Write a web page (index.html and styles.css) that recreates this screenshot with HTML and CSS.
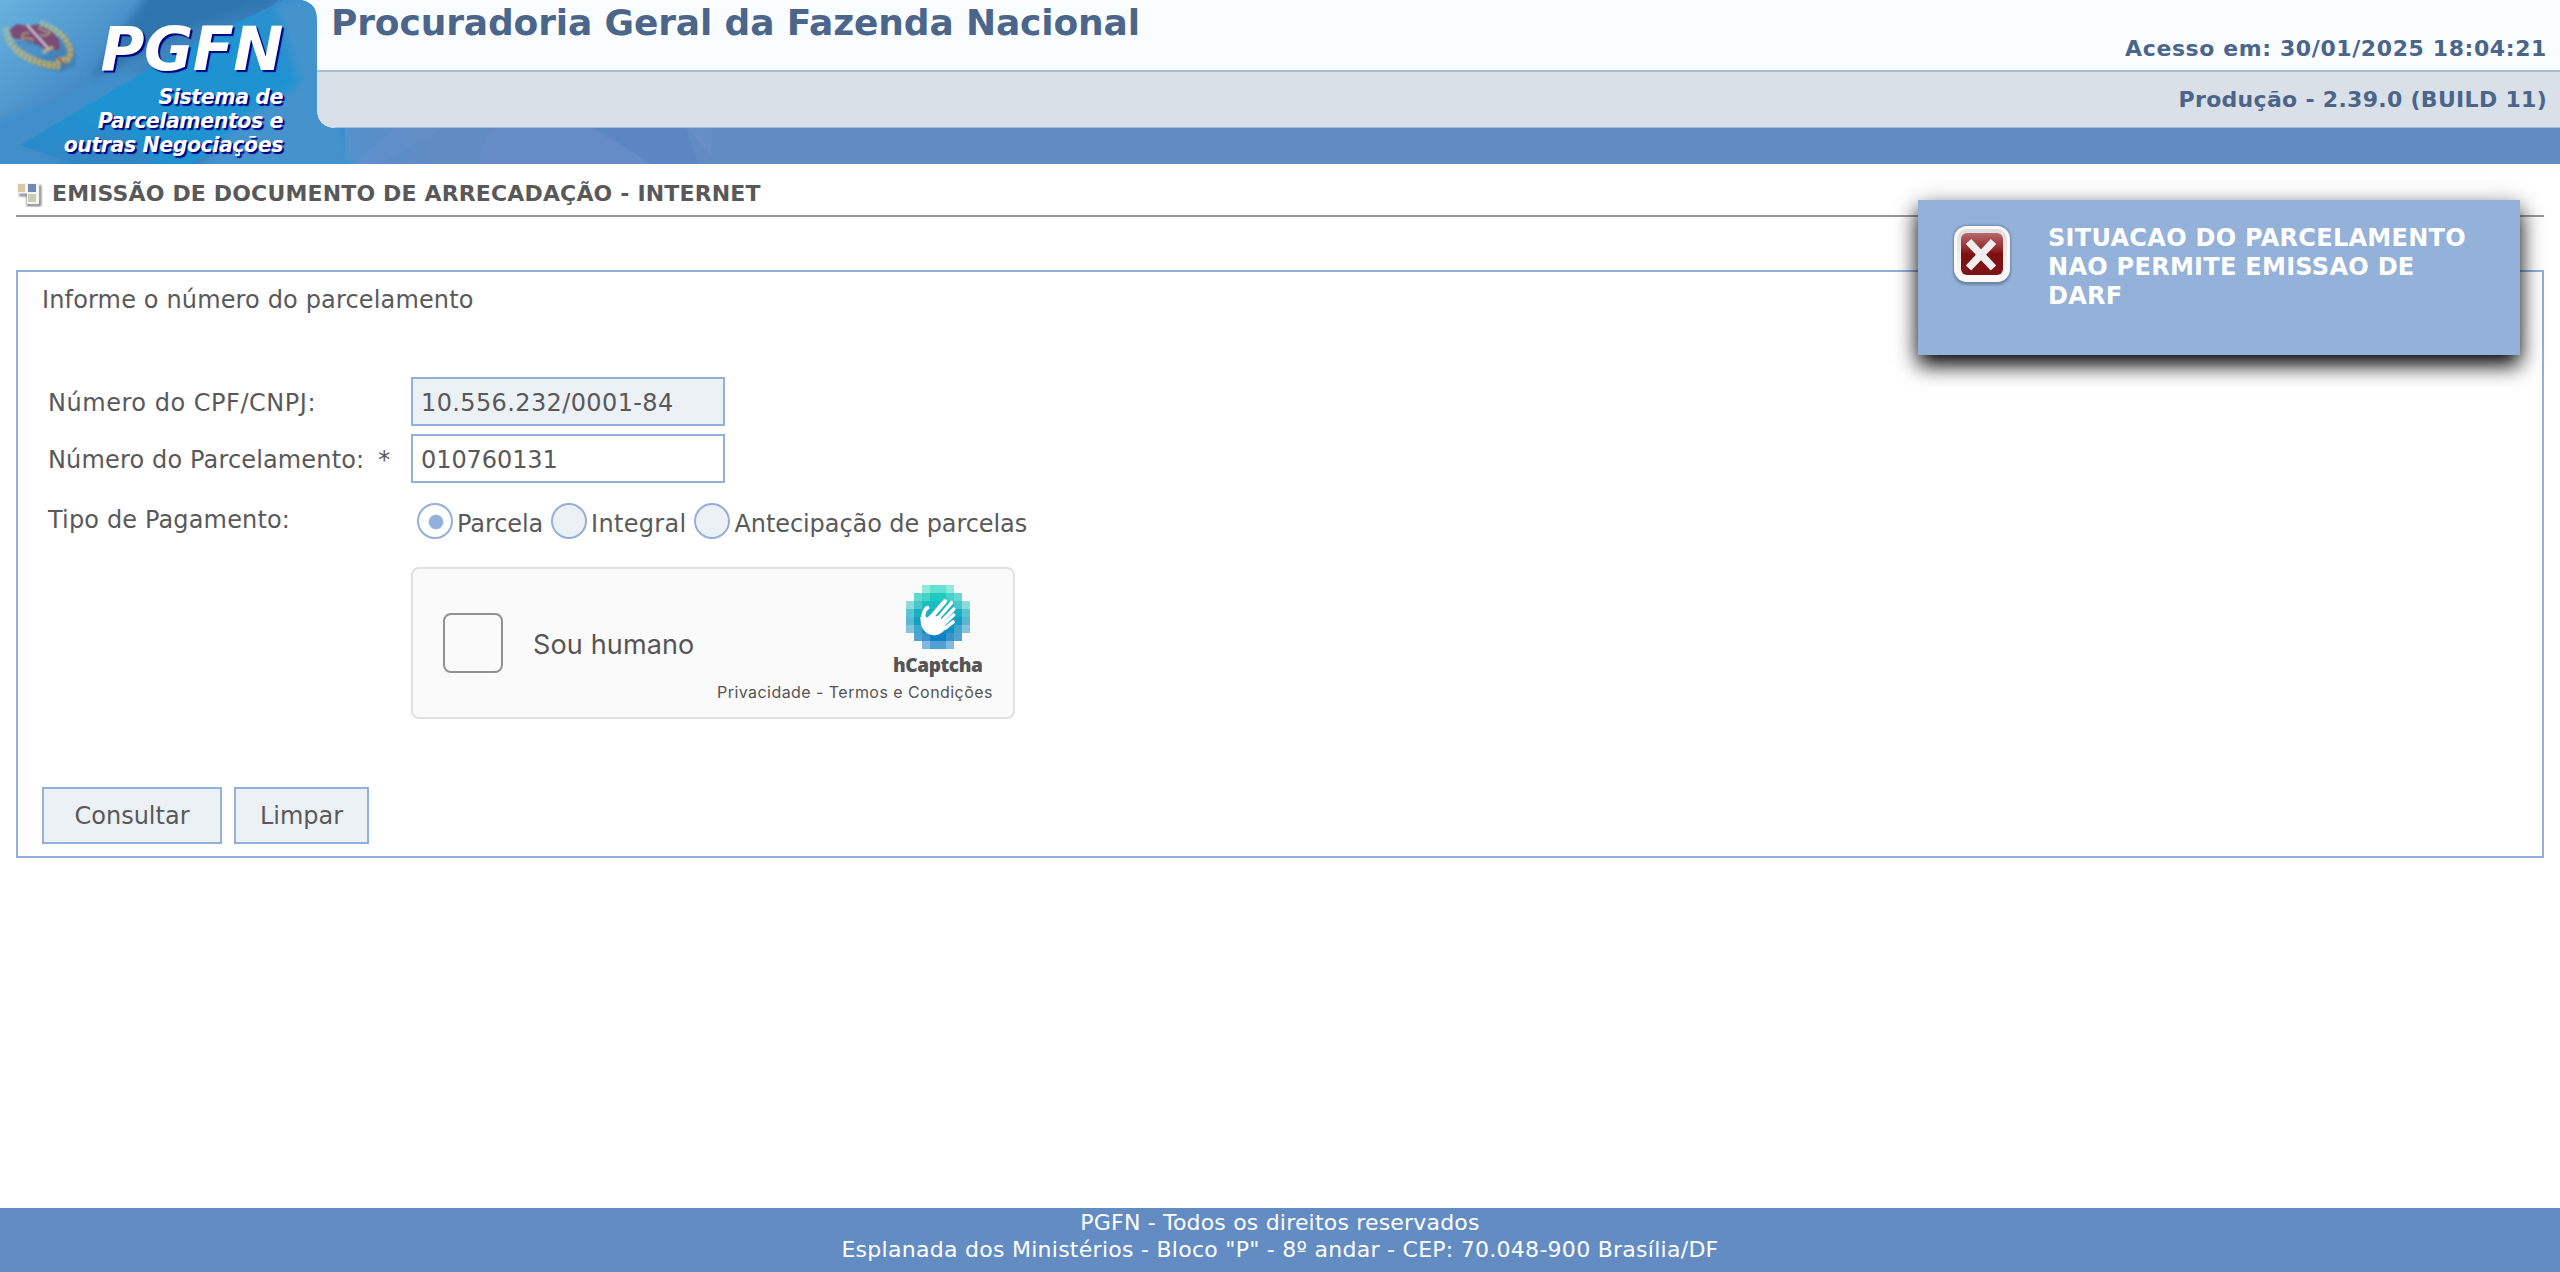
FILE: index.html
```html
<!DOCTYPE html>
<html lang="pt-BR">
<head>
<meta charset="utf-8">
<title>PGFN - Emissão de Documento de Arrecadação</title>
<link rel="stylesheet" href="styles.css">
</head>
<body>
<header class="header">
  <svg class="header-art" viewBox="0 0 2560 164" width="2560" height="164" aria-hidden="true">
    <defs>
      <linearGradient id="sky" x1="0" y1="0" x2="1" y2="0.5">
        <stop offset="0" stop-color="#69b2de"/><stop offset=".35" stop-color="#4a90c9"/><stop offset=".7" stop-color="#3276b0"/><stop offset="1" stop-color="#3a8ccb"/>
      </linearGradient>
      <linearGradient id="bar" x1="317" y1="0" x2="700" y2="0" gradientUnits="userSpaceOnUse">
        <stop offset="0" stop-color="#4793cf"/><stop offset=".1" stop-color="#5690cb"/><stop offset=".3" stop-color="#618bc3"/><stop offset="1" stop-color="#618bc3"/>
      </linearGradient>
      <linearGradient id="gold" x1="0" y1="0" x2="1" y2="1">
        <stop offset="0" stop-color="#8fb9b8"/><stop offset=".5" stop-color="#b3b384"/><stop offset="1" stop-color="#b9a25c"/>
      </linearGradient>
      <linearGradient id="beam" x1="0" y1="1" x2="1" y2="0">
        <stop offset="0" stop-color="#2f88c6"/><stop offset=".3" stop-color="#1f93d1"/><stop offset=".7" stop-color="#1f93d1"/><stop offset="1" stop-color="#338fcd"/>
      </linearGradient>
      <filter id="soft" x="-20%" y="-20%" width="140%" height="140%"><feGaussianBlur stdDeviation="5"/></filter>
      <filter id="fine"><feGaussianBlur stdDeviation="0.8"/></filter>
    </defs>
    <rect width="2560" height="164" fill="url(#bar)"/>
    <rect width="345" height="164" fill="url(#sky)"/>
    <g filter="url(#soft)">
      <path d="M-10 124 L120 70 L180 90 L20 144 L110 174 L-10 174Z" fill="#3f8fca"/>
      <path d="M150 -10 L300 -10 L200 26 L90 80 L120 34Z" fill="#2f74af"/>
    </g>
    <path d="M20 145 L110 92 L200 40 L284 0 L317 0 L317 90 L250 130 L190 164 L75 164Z" fill="url(#beam)"/>
    <g filter="url(#soft)">
      <path d="M275 0 L317 0 L350 180 L190 180 L240 120 L300 84Z" fill="#4593cd"/>
      <path d="M50 146 L120 130 L160 170 L70 170Z" fill="#3186c4"/>
    </g>
    <path d="M355 164 L394 128 L443 128 L380 164Z" fill="#6b92cb" opacity=".35"/>
    <path d="M478 164 Q482 140 494 128 L590 128 L652 164Z" fill="#6a8fc9" opacity=".45"/>
    <path d="M594 128 L652 164 L698 164 L686 128Z" fill="#5984bf" opacity=".6"/>
    <path d="M688 128 L711 128 L711 156Z" fill="#6c91ca" opacity=".6"/>
    <g filter="url(#fine)">
      <path d="M10 42 Q30 70 62 72 L74 66 Q80 50 66 36Z" fill="#2f72a4" opacity=".5"/>
      <path d="M20 42 Q36 46 50 54 L34 58 Q24 54 18 46Z" fill="#4c93c6"/>
      <path d="M9 30 L17 24 L28 26 L40 24 L52 31 L59 40 L60 50 L48 50 L32 42 L12 38Z" fill="#7c4c76"/>
      <path d="M6 27 Q7 42 19 52 Q36 65 60 66" fill="none" stroke="url(#gold)" stroke-width="7" stroke-dasharray="4 1"/>
      <path d="M40 23 Q58 28 67 42 Q74 53 67 60 L56 60" fill="none" stroke="url(#gold)" stroke-width="6" stroke-dasharray="4 1"/>
      <path d="M22 39 Q21 32 29 33 M34 40 Q24 36 22 40 M38 27 Q46 34 51 31 M40 35 Q48 37 50 32" fill="none" stroke="#a4917a" stroke-width="2"/>
      <path d="M27 25 L48 48" stroke="#cdbfd6" stroke-width="2.2"/>
      <path d="M43 52 L53 47" stroke="#c1b27a" stroke-width="3"/>
      <path d="M56 56 L66 66" stroke="#8c5a6a" stroke-width="2"/>
    </g>
    <path d="M302 0 Q317 3 317 20 V108 Q317 128 337 128 H2560 V0Z" fill="#f9fdff"/>
    <path d="M317 70 H2560 V128 H337 Q317 128 317 108Z" fill="#d9e0e8"/>
    <path d="M317 71 H2560" stroke="#abbdd2" stroke-width="2"/>
    <path d="M335 127.5 H2560" stroke="#a7bdd8"/>
  </svg>
  <div class="brand">
    <div class="brand-name"><span>PGFN</span></div>
    <div class="brand-sub"><span>Sistema de</span><span>Parcelamentos e</span><span>outras Negociações</span></div>
  </div>
  <h1 class="org"><span>Procuradoria Geral da Fazenda Nacional</span></h1>
  <div class="meta"><span class="access">Acesso em: 30/01/2025 18:04:21</span><span class="build">Produção - 2.39.0 (BUILD 11)</span></div>
</header>

<main class="main">
  <h2 class="page-title">
    <svg class="title-icon" width="28" height="28" viewBox="0 0 28 28" aria-hidden="true">
      <defs><filter id="blur1"><feGaussianBlur stdDeviation="1"/></filter></defs>
      <path d="M3 14h9v10h12V4" fill="none" stroke="#777" stroke-width="2.5" filter="url(#blur1)"/>
      <rect x="1" y="2" width="22" height="10" fill="#f4f4f4"/><rect x="11" y="12" width="12" height="11" fill="#f4f4f4"/>
      <rect x="2" y="3" width="7" height="8" fill="#d6cba2"/><rect x="12" y="3" width="8" height="8" fill="#6f88b7"/><rect x="12" y="13" width="8" height="8" fill="#c6d0b2"/>
    </svg>
    <span>EMISSÃO DE DOCUMENTO DE ARRECADAÇÃO - INTERNET</span>
  </h2>
  <form class="panel">
    <p class="intro"><span>Informe o número do parcelamento</span></p>
    <div class="row"><label class="label-cpf"><span>Número do CPF/CNPJ:</span></label><div class="field field-off"><span>10.556.232/0001-84</span></div></div>
    <div class="row"><label class="label-num"><span>Número do Parcelamento:</span><span>*</span></label><div class="field field-num"><span>010760131</span></div></div>
    <div class="row row-tipo"><label><span>Tipo de Pagamento:</span></label>
      <div class="radios">
        <i class="radio radio-on"></i><span class="opt-parcela">Parcela</span>
        <i class="radio"></i><span class="opt-integral">Integral</span>
        <i class="radio"></i><span class="opt-antecipa">Antecipação de parcelas</span>
      </div>
    </div>
    <div class="captcha">
      <i class="checkbox"></i>
      <div class="human"><span>Sou humano</span></div>
      <div class="captcha-side">
        <svg class="hlogo" width="64" height="64" viewBox="0 0 8 8" shape-rendering="crispEdges" aria-hidden="true">
          <path d="M2 0h1v1H2zM5 0h1v1H5z" fill="#8fe9dc"/><path d="M3 0h2v1H3z" fill="#63e1cf"/>
          <path d="M1 1h1v1H1zM6 1h1v1H6z" fill="#62dacd"/><path d="M2 1h1v1H2zM5 1h1v1H5z" fill="#49d2c9"/><path d="M3 1h2v1H3z" fill="#1fcbc0"/>
          <path d="M0 2h1v1H0zM7 2h1v1H7z" fill="#8ddcdb"/><path d="M1 2h1v1H1zM6 2h1v1H6z" fill="#49c7ca"/><path d="M2 2h4v1H2z" fill="#1cbcc2"/>
          <path d="M0 3h1v1H0zM7 3h1v1H7z" fill="#5bc3cf"/><path d="M1 3h6v1H1z" fill="#1aafc2"/>
          <path d="M0 4h1v1H0zM7 4h1v1H7z" fill="#59b7d0"/><path d="M1 4h6v1H1z" fill="#159fc0"/>
          <path d="M0 5h1v1H0zM7 5h1v1H7z" fill="#85c3dc"/><path d="M1 5h1v1H1zM6 5h1v1H6z" fill="#3fa5ca"/><path d="M2 5h4v1H2z" fill="#1391c0"/>
          <path d="M1 6h1v1H1zM6 6h1v1H6z" fill="#51a2d1"/><path d="M2 6h1v1H2zM5 6h1v1H5z" fill="#3994cc"/><path d="M3 6h2v1H3z" fill="#0b83c2"/>
          <path d="M2 7h1v1H2zM5 7h1v1H5z" fill="#82b7df"/><path d="M3 7h2v1H3z" fill="#519fd3"/>
          <g shape-rendering="auto" fill="none" stroke="#fff" stroke-linecap="round" stroke-linejoin="round" stroke-width=".44">
            <path d="M2.68 2.85Q2.2 3.1 2.15 4.1" stroke-width=".5"/>
            <path d="M4.85 2.05L3.1 4.1" stroke-width=".55"/>
            <path d="M5.7 2.2L3.9 4.3M5.98 3L4.3 4.7M5.95 3.75L4.6 5M5.9 4.62L4.9 5.4"/>
            <path d="M1.85 4.1Q2.3 3.6 2.6 4.15L3.1 3.8L4.2 4L4.7 4.8L5 5.4Q4.3 6.25 3.5 6.25Q1.8 6.1 1.85 4.1Z" fill="#fff" stroke-width=".1"/>
          </g>
        </svg>
        <div class="hname"><span>hCaptcha</span></div>
        <div class="hterms"><span>Privacidade - Termos e Condições</span></div>
      </div>
    </div>
    <div class="actions"><button type="button" class="btn-consultar"><span>Consultar</span></button><button type="button" class="btn-limpar"><span>Limpar</span></button></div>
  </form>
</main>

<footer class="footer"><span class="rights">PGFN - Todos os direitos reservados</span><span class="address">Esplanada dos Ministérios - Bloco "P" - 8º andar - CEP: 70.048-900 Brasília/DF</span></footer>

<aside class="toast">
  <svg width="64" height="66" viewBox="0 0 64 66" aria-hidden="true">
    <defs>
      <linearGradient id="frame" x1="0" y1="0" x2="0" y2="1"><stop offset="0" stop-color="#dedede"/><stop offset="1" stop-color="#fbfbfb"/></linearGradient>
      <linearGradient id="red" x1="0" y1="0" x2="0" y2="1"><stop offset="0" stop-color="#b8686c"/><stop offset=".35" stop-color="#962f33"/><stop offset=".5" stop-color="#7d0f12"/><stop offset="1" stop-color="#7f1417"/></linearGradient>
      <filter id="sh"><feGaussianBlur stdDeviation="1.2"/></filter>
    </defs>
    <rect x="3" y="3" width="58" height="60" rx="14" fill="#6d86a6" filter="url(#sh)"/>
    <rect x="4" y="4" width="56" height="56" rx="13" fill="#fafafa"/>
    <rect x="7" y="7" width="50" height="50" rx="10" fill="url(#frame)"/>
    <rect x="11" y="11" width="42" height="42" rx="6" fill="url(#red)"/>
    <path d="M18.500 19.500 L43.500 46 M43.500 19.500 L18.500 46" stroke="#eee" stroke-width="7.500"/>
  </svg>
  <div class="toast-text"><span>SITUACAO DO PARCELAMENTO</span><span>NAO PERMITE EMISSAO DE</span><span>DARF</span></div>
</aside>
</body>
</html>
```
FILE: styles.css
```css
* { box-sizing: border-box; }
body { margin: 0; min-height: 1272px; display: flex; flex-direction: column; background: #fff; color: #595959; font: 24px/30px "DejaVu Sans", Verdana, sans-serif; position: relative; overflow: hidden; }
h1, h2, p { margin: 0; font-weight: bold; }
span { white-space: nowrap; }
.header { position: relative; height: 164px; display: flex; color: #4c658a; font-weight: bold; }
.header-art { position: absolute; left: 0; top: 0; }
.brand, .org, .meta { position: relative; }
.brand { width: 331px; padding-right: 48px; text-align: right; color: #fff; font-style: italic; text-shadow: 2px 2px 1px #000080; }
.brand-name { font-size: 60px; line-height: 72px; letter-spacing: -.5px; padding-top: 13px; height: 85px; }
.brand-sub { font-size: 20.500px; letter-spacing: -.42px; line-height: 24px; display: flex; flex-direction: column; align-items: flex-end; }
.org { font-size: 36px; line-height: 44px; letter-spacing: -.14px; padding-top: 1px; flex: 1; }
.meta { font-size: 22px; display: flex; flex-direction: column; align-items: flex-end; padding: 34px 13px 0 0; gap: 21px; }
.access { letter-spacing: .6px; }
.build { letter-spacing: .3px; }
.main { flex: 1; padding: 0 16px; }
.page-title { display: flex; gap: 8px; align-items: center; height: 53px; padding-top: 9px; border-bottom: 2px solid #999; font-size: 22px; letter-spacing: .155px; }
.title-icon { margin-top: 2px; }
.panel { margin-top: 53px; height: 588px; border: 2px solid #92b0da; padding: 13px 24px 0; display: flex; flex-direction: column; letter-spacing: .15px; }
.intro { font-weight: normal; height: 92px; }
.row { display: flex; height: 57px; padding-left: 6px; }
.row label { width: 363px; padding-top: 11px; }
.label-cpf { letter-spacing: .53px; }
.label-num { display: flex; gap: 14px; }
.field { width: 314px; height: 49px; border: 2px solid #92b0da; padding: 9px 8px; letter-spacing: .38px; }
.field-num { letter-spacing: -.08px; }
.field-off { background: #ecf1f6; }
.row-tipo { height: 76px; }
.row .label-cpf, .row .label-num { padding-top: 11px; }
.row-tipo label { padding-top: 14px; }
.radios { display: flex; align-items: center; height: 36px; margin: 12px 0 0 6px; }
.radios span { padding: 5px 0 0 4px; margin-right: 8px; }
.opt-parcela { letter-spacing: -.1px; }
.opt-integral { letter-spacing: .3px; }
.opt-antecipa { letter-spacing: -.08px; }
.radio { width: 36px; height: 36px; border: 2px solid #92b0da; border-radius: 50%; background: #ecf1f6; flex: none; }
.radio-on { background: radial-gradient(circle at 17px 17px, #92b0da 6.5px, #fff 8px); }
.captcha { margin-left: 369px; width: 604px; height: 152px; border: 2px solid #e0e0e0; border-radius: 8px; background: #fafafa; display: flex; font-family: Inter, "Liberation Sans", sans-serif; color: #555; padding-left: 30px; }
.checkbox { width: 60px; height: 60px; margin-top: 44px; border: 2px solid #919191; border-radius: 8px; flex: none; }
.human { font-size: 27px; padding: 61px 0 0 30px; width: 182px; flex: none; }
.captcha-side { width: 308px; display: flex; flex-direction: column; letter-spacing: 0; }
.hlogo { margin: 16px 0 0 221px; }
.hname { font: 800 19px/24px "Open Sans", sans-serif; letter-spacing: -.4px; margin-left: 208px; padding-top: 4px; }
.hterms { font-size: 16px; line-height: 20px; letter-spacing: .45px; margin: 5px 0 0 32px; }
.actions { display: flex; gap: 12px; margin-top: 68px; }
button { height: 57px; border: 2px solid #92b0da; background: #ecf1f6; color: inherit; font: inherit; padding: 1px 0 0; }
.btn-consultar { width: 180px; }
.btn-limpar { width: 135px; }
.footer { height: 64px; padding-top: 1px; background: #638cc3; color: #fff; font-size: 22px; line-height: 27px; display: flex; flex-direction: column; align-items: center; }
.rights { letter-spacing: .19px; }
.address { letter-spacing: .27px; }
.toast { position: absolute; left: 1918px; top: 200px; width: 602px; height: 155px; background: #94b1da; box-shadow: 0 10px 20px #000, 0 0 30px rgba(0,0,0,.08); display: flex; padding: 22px 0 0 32px; color: #fff; font-weight: bold; letter-spacing: .29px; }
.toast-text { display: flex; flex-direction: column; line-height: 29px; padding: 2px 0 0 34px; }
```
